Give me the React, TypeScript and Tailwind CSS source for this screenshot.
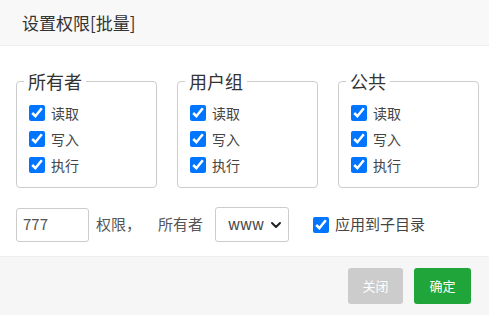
import React from "react";

const font = { fontFamily: '"Noto Sans CJK SC", "Noto Sans", sans-serif' };

function Box({ title }: { title: string }) {
  const items = ["读取", "写入", "执行"];
  return (
    <fieldset className="w-[141px] shrink-0 h-[119px] border border-[#cccccc] rounded-[4px] pl-[12px] pt-[7px] m-0">
      <legend className="ml-[-5px] px-[4px] text-[18px] leading-[24px] text-[#333]">{title}</legend>
      <div className="flex flex-col">
        {items.map((t) => (
          <label key={t} className="flex items-center h-[26px] gap-[6px] text-[14px] text-[#444]">
            <input type="checkbox" defaultChecked className="w-4 h-4 m-0" />
            <span>{t}</span>
          </label>
        ))}
      </div>
    </fieldset>
  );
}

export default function App() {
  return (
    <div className="w-[489px] h-[315px] bg-white flex flex-col" style={font}>
      <div className="h-[46px] bg-[#f8f8f8] border-b border-[#eeeeee] flex items-center pl-[22px] text-[17px] text-[#333]">
        设置权限[批量]
      </div>
      <div className="flex-1 flex flex-col pl-[16px]">
        <div className="flex gap-[20px] mt-[23px]">
          <Box title="所有者" />
          <Box title="用户组" />
          <Box title="公共" />
        </div>
        <div className="flex items-center mt-[19px] text-[15px] text-[#555]">
          <div className="w-[73px] h-[34px] border border-[#cccccc] rounded-[3px] flex items-center pl-[6px] text-[#555]">777</div>
          <span className="ml-[7px]">权限，</span>
          <span className="ml-[17px]">所有者</span>
          <div className="ml-[12px] w-[74px] h-[35px] border border-[#cccccc] rounded-[3px] flex items-center pl-[12px] pr-[6px] justify-between text-[#444]">
            <span>www</span>
            <svg width="12" height="12" viewBox="0 0 12 12" fill="none">
              <path d="M2 4 L6 8 L10 4" stroke="#222" strokeWidth="2" strokeLinecap="round" strokeLinejoin="round" />
            </svg>
          </div>
          <label className="ml-[24px] flex items-center gap-[6px] text-[#444]">
            <input type="checkbox" defaultChecked className="w-4 h-4 m-0" />
            <span>应用到子目录</span>
          </label>
        </div>
      </div>
      <div className="h-[59px] bg-[#f6f6f6] border-t border-[#eeeeee] flex justify-end items-start pt-[11px] pr-[18px] gap-[11px]">
        <button className="w-[55px] h-[36px] bg-[#cccccc] text-white text-[13px] rounded-[3px]">关闭</button>
        <button className="w-[57px] h-[36px] bg-[#20a53a] text-white text-[13px] rounded-[3px]">确定</button>
      </div>
    </div>
  );
}
